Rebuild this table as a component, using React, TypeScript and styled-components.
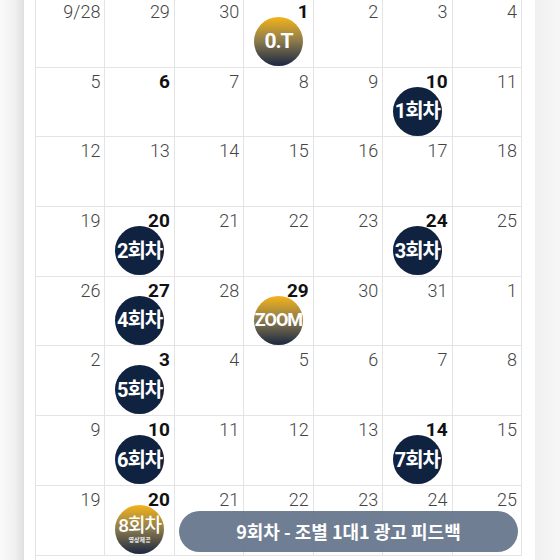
import React from 'react'
import styled, { createGlobalStyle, css } from 'styled-components'

const GlobalStyle = createGlobalStyle`
  html, body {
    margin: 0;
    padding: 0;
    background: #ffffff;
    overflow: hidden;
  }
  body {
    font-family: Roboto, 'Noto Sans CJK KR', sans-serif;
  }
`

const Page = styled.div`
  display: flex;
  width: 560px;
  height: 560px;
  overflow: hidden;
`

const LeftEdge = styled.div`
  width: 24px;
  flex-shrink: 0;
  background: linear-gradient(to right, #fafafa, #f1f1f1 60%, #e0e0e0);
`

const RightEdge = styled.div`
  width: 25px;
  flex-shrink: 0;
  margin-left: auto;
  background: linear-gradient(to right, #f0f0f0, #f7f7f7);
`

const Calendar = styled.div`
  width: 487px;
  margin: -2px 0 0 11px;
  border-left: 1px solid #e4e4e4;
  box-sizing: border-box;
  display: flex;
  flex-direction: column;
`

const Week = styled.div`
  display: grid;
  grid-template-columns: repeat(7, 1fr);
  height: 69.7px;
  flex-shrink: 0;
`

const DayCell = styled.div<{ $col: number }>`
  grid-row: 1;
  grid-column: ${(p) => p.$col + 1};
  border-right: 1px solid #e4e4e4;
  border-bottom: 1px solid #e4e4e4;
  padding: 4px 4px 0;
  display: flex;
  flex-direction: column;
  min-width: 0;
`

const DayNum = styled.div<{ $bold?: boolean }>`
  height: 19px;
  text-align: right;
  font-size: 18px;
  line-height: 19px;
  font-weight: 300;
  color: #444;
  position: relative;
  z-index: 1;
  ${(p) =>
    p.$bold &&
    css`
      font-size: 19px;
      font-weight: 700;
      color: #111;
    `}
`

const Badge = styled.div<{ $gold?: boolean }>`
  width: 49px;
  height: 49px;
  border-radius: 50%;
  margin: -4px auto 0;
  display: flex;
  flex-direction: column;
  align-items: center;
  justify-content: center;
  color: #fff;
  background: ${(p) =>
    p.$gold ? 'linear-gradient(to bottom, #f4b31a 0%, #8d7c4c 48%, #1b2742 100%)' : '#0f2240'};
`

const BadgeLabel = styled.span<{ $size: number; $weight?: number }>`
  font-size: ${(p) => p.$size}px;
  font-weight: ${(p) => p.$weight ?? 700};
  line-height: 1;
  letter-spacing: -1px;
  white-space: nowrap;
`

const BadgeSub = styled.span`
  margin-top: 2px;
  font-size: 6px;
  font-weight: 700;
  line-height: 1;
  opacity: 0.9;
`

const EventBar = styled.div<{ $from: number; $to: number }>`
  grid-row: 1;
  grid-column: ${(p) => `${p.$from + 1} / ${p.$to + 2}`};
  align-self: start;
  margin: 25px 4px 0;
  height: 41px;
  border-radius: 21px;
  background: rgba(96, 112, 136, 0.9);
  color: #fff;
  display: flex;
  align-items: center;
  justify-content: center;
  font-family: 'Noto Sans CJK KR', sans-serif;
  font-size: 18px;
  font-weight: 700;
  z-index: 2;
`

type BadgeInfo = { text: string; gold?: boolean; size: number; weight?: number; sub?: string }
type Day = { label: string; bold?: boolean; badge?: BadgeInfo }

const d = (label: string, badge?: BadgeInfo, bold = !!badge): Day => ({ label, bold, badge })
const round = (n: number): BadgeInfo => ({ text: `${n}회차`, size: 20 })

const weeks: { days: Day[]; bar?: { from: number; to: number; text: string } }[] = [
  { days: [d('9/28'), d('29'), d('30'), d('1', { text: '0.T', gold: true, size: 21 }), d('2'), d('3'), d('4')] },
  { days: [d('5'), d('6', undefined, true), d('7'), d('8'), d('9'), d('10', round(1)), d('11')] },
  { days: [d('12'), d('13'), d('14'), d('15'), d('16'), d('17'), d('18')] },
  { days: [d('19'), d('20', round(2)), d('21'), d('22'), d('23'), d('24', round(3)), d('25')] },
  { days: [d('26'), d('27', round(4)), d('28'), d('29', { text: 'ZOOM', gold: true, size: 18 }), d('30'), d('31'), d('1')] },
  { days: [d('2'), d('3', round(5)), d('4'), d('5'), d('6'), d('7'), d('8')] },
  { days: [d('9'), d('10', round(6)), d('11'), d('12'), d('13'), d('14', round(7)), d('15')] },
  {
    days: [
      d('19'),
      d('20', { text: '8회차', gold: true, size: 19, weight: 500, sub: '영상제공' }),
      d('21'),
      d('22'),
      d('23'),
      d('24'),
      d('25'),
    ],
    bar: { from: 2, to: 6, text: '9회차 - 조별 1대1 광고 피드백' },
  },
]

export default function App() {
  return (
    <>
      <GlobalStyle />
      <Page>
        <LeftEdge />
        <Calendar>
          {weeks.map((week, wi) => (
            <Week key={wi}>
              {week.days.map((day, di) => (
                <DayCell key={di} $col={di}>
                  <DayNum $bold={day.bold}>{day.label}</DayNum>
                  {day.badge && (
                    <Badge $gold={day.badge.gold}>
                      <BadgeLabel $size={day.badge.size} $weight={day.badge.weight}>
                        {day.badge.text}
                      </BadgeLabel>
                      {day.badge.sub && <BadgeSub>{day.badge.sub}</BadgeSub>}
                    </Badge>
                  )}
                </DayCell>
              ))}
              {week.bar && (
                <EventBar $from={week.bar.from} $to={week.bar.to}>
                  {week.bar.text}
                </EventBar>
              )}
            </Week>
          ))}
        </Calendar>
        <RightEdge />
      </Page>
    </>
  )
}
